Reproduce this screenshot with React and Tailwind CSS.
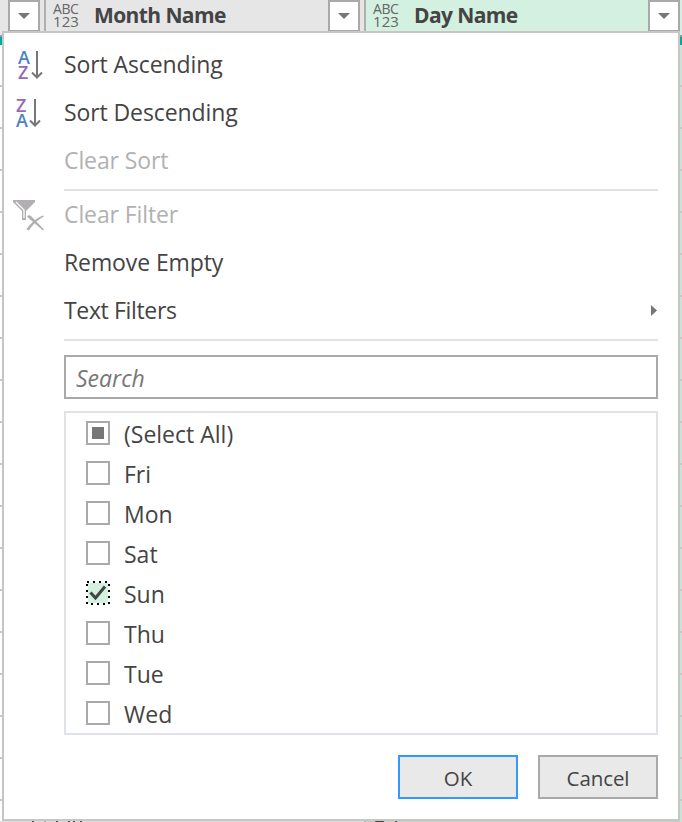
import React from "react";

const days = ["Fri", "Mon", "Sat", "Sun", "Thu", "Tue", "Wed"];
const rows = Array.from({ length: 18 });

function DropButton() {
  return (
    <div className="flex h-[32px] w-[32px] shrink-0 items-center justify-center border-2 border-[#a9a9a9] bg-white">
      <svg width="12" height="6" viewBox="0 0 12 6" className="block">
        <path d="M0 0H12L6 6Z" fill="#777" />
      </svg>
    </div>
  );
}

function ColumnHeader({ label }) {
  return (
    <>
      <div className="ml-[7px] w-[28px] pt-[2px] text-[14px] leading-[13px] whitespace-nowrap text-[#666]">
        <div className="tracking-[-0.4px]">ABC</div>
        <div className="text-[15px] tracking-[0.1px]">123</div>
      </div>
      <div className="ml-[13px] grow text-[21px] leading-[31px] font-bold tracking-[-0.6px] whitespace-nowrap text-[#444]">{label}</div>
    </>
  );
}

function SortIcon({ first, second, firstColor, secondColor, shift }) {
  return (
    <svg width="30" height="34" viewBox="0 0 30 34" className={shift}>
      <text x="2" y="15.5" fontSize="18" fontWeight="600" fill={firstColor}>{first}</text>
      <text x="2" y="31" fontSize="18" fontWeight="600" fill={secondColor}>{second}</text>
      <path d="M21 3V29.5M16 24.5L21 29.5L26 24.5" fill="none" stroke="#777" strokeWidth="2" />
    </svg>
  );
}

function MenuItem({ icon, children, disabled, arrow }) {
  return (
    <div className="flex h-[48px] items-center tracking-[-0.1px]">
      <div className="w-[60px] shrink-0">{icon}</div>
      <div className={disabled ? "grow pb-[2px] text-[#b1b1b1]" : "grow pb-[2px]"}>{children}</div>
      {arrow && (
        <svg width="6" height="12" viewBox="0 0 6 12" className="mr-[21px]">
          <path d="M0 0L6 5.5L0 11Z" fill="#777" />
        </svg>
      )}
    </div>
  );
}

function CheckBox({ state }) {
  if (state === "checked") {
    return (
      <svg width="24" height="24" viewBox="0 0 24 24">
        <rect x="2" y="2" width="20" height="20" fill="#d3f0e0" />
        <rect x="1" y="1" width="22" height="22" fill="none" stroke="#000" strokeWidth="2" strokeDasharray="2 4" />
        <path d="M4.5 11.5L9.5 17L19 5.5" fill="none" stroke="#444" strokeWidth="3" />
      </svg>
    );
  }
  return (
    <div className="flex h-[24px] w-[24px] items-center justify-center border-2 border-[#a9a9a9] bg-white">
      {state === "mixed" && <div className="h-[12px] w-[12px] bg-[#777]" />}
    </div>
  );
}

function Option({ label, state }) {
  return (
    <div className="flex h-[40px] items-center">
      <CheckBox state={state} />
      <div className="mt-[2px] ml-[14px]">{label}</div>
    </div>
  );
}

export default function App() {
  return (
    <div className="relative h-[822px] w-[682px] overflow-hidden bg-white font-['Open_Sans','Noto_Sans',sans-serif] text-[23px] leading-[30px] text-[#444]">
      <div className="flex h-[35px] items-start">
        <div className="flex h-[35px] w-[44px] bg-[#e6e6e6] pl-[8px]">
          <DropButton />
        </div>
        <div className="flex h-[35px] w-[320px] border-l-2 border-[#b0b0b0] bg-[#e6e6e6]">
          <ColumnHeader label="Month Name" />
          <DropButton />
          <div className="w-[4px]" />
        </div>
        <div className="flex h-[35px] w-[318px] border-l-2 border-[#b0b0b0] bg-[#d3f0e0]">
          <ColumnHeader label="Day Name" />
          <DropButton />
          <div className="w-[2px]" />
        </div>
      </div>
      <div className="h-[2px] bg-[#999]" />
      <div className="h-[8px] bg-[#00a99d]" />
      {rows.map((_, i) => (
        <div key={i} className="flex h-[42px] border-b-2 border-[#c8c8c8]">
          <div className="grow" />
          <div className="w-[318px] bg-[#c9e4d6]" />
        </div>
      ))}
      <div className="flex h-[42px] border-b-2 border-[#c8c8c8]">
        {/* Glyph tops that peek out beneath the menu */}
        <div className="flex w-[364px] items-start pt-[20px]">
          <div className="h-[2px] w-[364px] bg-[#dedede] pl-[32px]">
            <div className="flex h-[2px]">
              <div className="w-[2px] bg-[#555]" />
              <div className="ml-[10px] w-[2px] bg-[#aaa]" />
              <div className="ml-[10px] w-[2px] bg-[#555]" />
              <div className="ml-[10px] w-[2px] bg-[#555]" />
              <div className="ml-[3px] w-[2px] bg-[#555]" />
              <div className="ml-[5px] w-[2px] bg-[#555]" />
            </div>
          </div>
        </div>
        <div className="w-[316px] border-l-2 border-[#b0b0b0] bg-[#c2d3c9] pt-[12px] pl-[7px] text-[22px]">Fri</div>
        <div className="w-[2px] bg-[#c9e4d6]" />
      </div>
      <div className="absolute top-[31px] left-[2px] h-[790px] w-[678px] border-2 border-[#c6c6c6] bg-white pt-[8px]">
        <MenuItem icon={<SortIcon first="A" second="Z" firstColor="#4a84bd" secondColor="#9a67b8" shift="ml-[12px]" />}>Sort Ascending</MenuItem>
        <MenuItem icon={<SortIcon first="Z" second="A" firstColor="#9a67b8" secondColor="#4a84bd" shift="ml-[10px]" />}>Sort Descending</MenuItem>
        <MenuItem disabled>Clear Sort</MenuItem>
        <div className="mt-[4px] mr-[20px] ml-[60px] h-[2px] bg-[#e1e1e6]" />
        <MenuItem
          disabled
          icon={
            <svg width="34" height="34" viewBox="0 0 34 34" className="ml-[8px]">
              <path d="M1 2H23V4L14 13V22H10V13L1 4Z" fill="#b1afb1" />
              <path d="M4 4L12 12V20" fill="none" stroke="#fff" strokeWidth="1.3" />
              <path d="M15 18.5C16 16.5 18 17 19 18L32 31.5L31 32.5L17 20.5ZM31 17.5L32 18.5C26 21.5 20 27 17 32.5L14.5 31.5C18 25.5 25 19.5 31 17.5Z" fill="#b1afb1" />
            </svg>
          }
        >
          Clear Filter
        </MenuItem>
        <MenuItem>Remove Empty</MenuItem>
        <MenuItem arrow>
          <span className="tracking-[-0.35px]">Text Filters</span>
        </MenuItem>
        <div className="mt-[4px] mr-[20px] ml-[60px] h-[2px] bg-[#e1e1e6]" />
        <div className="mt-[14px] mr-[20px] ml-[60px] flex h-[44px] items-center border-2 border-[#a9a9a9] pt-[2px] pl-[10px] text-[#777] italic">Search</div>
        <div className="mt-[12px] mr-[20px] ml-[60px] h-[324px] border-2 border-[#dfe2e6] pl-[20px]">
          <Option label="(Select All)" state="mixed" />
          {days.map((d) => (
            <Option key={d} label={d} state={d === "Sun" ? "checked" : "empty"} />
          ))}
        </div>
        <div className="mt-[20px] mr-[20px] flex justify-end gap-[20px] text-[20.5px] tracking-[-0.1px]">
          <div className="flex h-[44px] w-[120px] items-center justify-center border-2 border-[#3399ff] bg-[#e9e9e9] pt-[2px]">OK</div>
          <div className="flex h-[44px] w-[120px] items-center justify-center border-2 border-[#a9a9a9] bg-[#e9e9e9] pt-[2px]">Cancel</div>
        </div>
      </div>
    </div>
  );
}
